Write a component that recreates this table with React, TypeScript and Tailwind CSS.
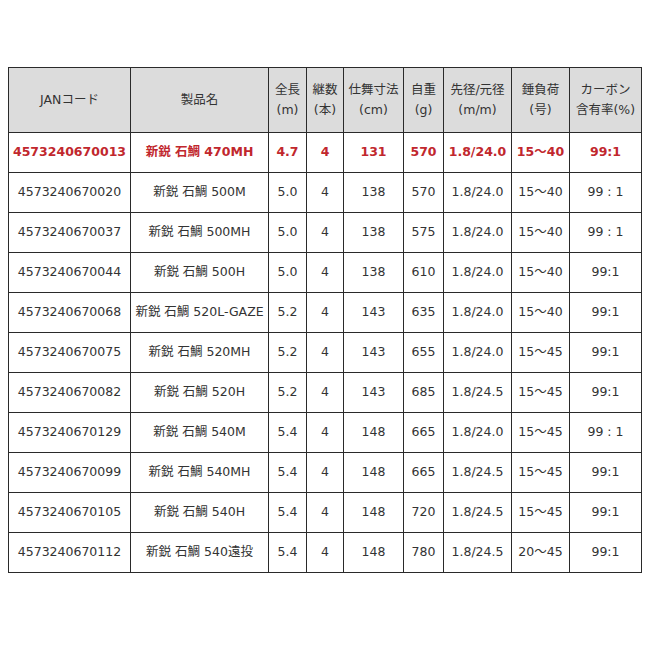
const rows: string[][] = [
  ['4573240670013', '新鋭 石鯛 470MH', '4.7', '4', '131', '570', '1.8/24.0', '15〜40', '99:1'],
  ['4573240670020', '新鋭 石鯛 500M', '5.0', '4', '138', '570', '1.8/24.0', '15〜40', '99 : 1'],
  ['4573240670037', '新鋭 石鯛 500MH', '5.0', '4', '138', '575', '1.8/24.0', '15〜40', '99 : 1'],
  ['4573240670044', '新鋭 石鯛 500H', '5.0', '4', '138', '610', '1.8/24.0', '15〜40', '99:1'],
  ['4573240670068', '新鋭 石鯛 520L-GAZE', '5.2', '4', '143', '635', '1.8/24.0', '15〜40', '99:1'],
  ['4573240670075', '新鋭 石鯛 520MH', '5.2', '4', '143', '655', '1.8/24.0', '15〜45', '99:1'],
  ['4573240670082', '新鋭 石鯛 520H', '5.2', '4', '143', '685', '1.8/24.5', '15〜45', '99:1'],
  ['4573240670129', '新鋭 石鯛 540M', '5.4', '4', '148', '665', '1.8/24.0', '15〜45', '99 : 1'],
  ['4573240670099', '新鋭 石鯛 540MH', '5.4', '4', '148', '665', '1.8/24.5', '15〜45', '99:1'],
  ['4573240670105', '新鋭 石鯛 540H', '5.4', '4', '148', '720', '1.8/24.5', '15〜45', '99:1'],
  ['4573240670112', '新鋭 石鯛 540遠投', '5.4', '4', '148', '780', '1.8/24.5', '20〜45', '99:1'],
]

const headers: string[][] = [
  ['JANコード'],
  ['製品名'],
  ['全長', '(m)'],
  ['継数', '(本)'],
  ['仕舞寸法', '(cm)'],
  ['自重', '(g)'],
  ['先径/元径', '(m/m)'],
  ['錘負荷', '(号)'],
  ['カーボン', '含有率(%)'],
]

const widths = [122, 138, 38, 37, 60, 40, 68, 58, 72]

export default function App() {
  return (
    <div
      className="w-[650px] h-[650px] bg-white pt-[67px] pl-[8px] text-[#333] text-[12.5px]"
      style={{ fontFamily: '"DejaVu Sans", "Noto Sans CJK JP", sans-serif' }}
    >
      {/* Spec table */}
      <table className="table-fixed border-collapse w-[633px]">
        <colgroup>
          {widths.map((w, i) => (
            <col key={i} style={{ width: w }} />
          ))}
        </colgroup>
        <thead>
          <tr className="h-[65px] bg-[#dcdcdc]">
            {headers.map((h, i) => (
              <th key={i} className="border border-[#2a2a2a] font-normal text-center leading-[20px] p-0">
                {h.map((line, j) => (
                  <div key={j}>{line}</div>
                ))}
              </th>
            ))}
          </tr>
        </thead>
        <tbody>
          {rows.map((r, i) => (
            <tr key={i} className={i === 0 ? 'h-[40px] text-[#c1272d] font-bold' : 'h-[40px]'}>
              {r.map((cell, j) => (
                <td key={j} className="border border-[#2a2a2a] text-center p-0 whitespace-nowrap">
                  {cell}
                </td>
              ))}
            </tr>
          ))}
        </tbody>
      </table>
    </div>
  )
}
